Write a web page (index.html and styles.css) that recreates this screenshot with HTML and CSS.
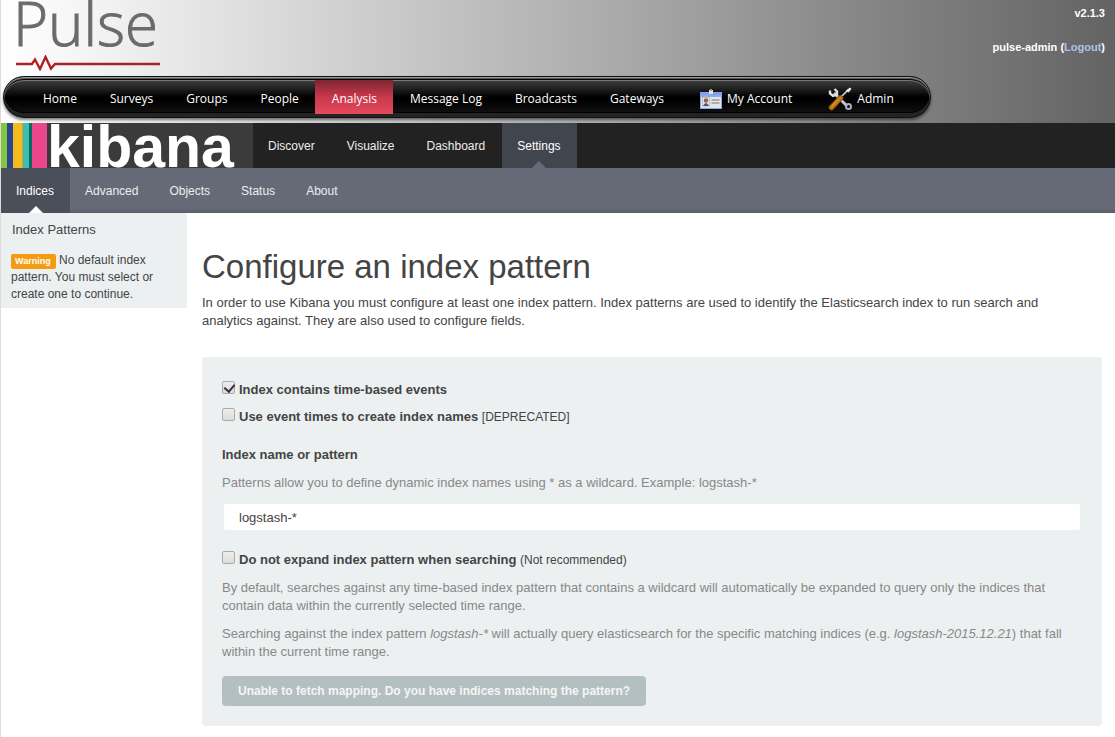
FILE: index.html
```html
<!DOCTYPE html>
<html lang="en">
<head>
<meta charset="utf-8">
<title>Pulse - Analysis</title>
<link rel="stylesheet" href="styles.css">
</head>
<body>
<header class="banner">
  <div class="banner-top">
    <div class="brand">
      <span class="brand-name">Pulse</span>
      <svg class="brand-line" width="147" height="16" viewBox="-3 0 147 16" aria-hidden="true"><path d="M0 9H16L19 4.500L24 14L29.500 2L35 13.500L39 9H144" fill="none" stroke="#b01f26" stroke-width="2.400"/></svg>
    </div>
    <div class="account">
      <span>v2.1.3</span>
      <span>pulse-admin (<a href="#logout">Logout</a>)</span>
    </div>
  </div>
  <nav class="menu" aria-label="Main">
    <a href="#home">Home</a>
    <a href="#surveys">Surveys</a>
    <a href="#groups">Groups</a>
    <a href="#people">People</a>
    <a class="current" href="#analysis">Analysis</a>
    <a href="#log">Message Log</a>
    <a href="#broadcasts">Broadcasts</a>
    <a href="#gateways">Gateways</a>
    <a class="with-icon" href="#account"><svg width="22" height="20" viewBox="0 0 22 20" aria-hidden="true"><rect x=".5" y="3.500" width="21" height="16" fill="#e3e4ea" stroke="#8aa6e6"/><path d="M1 4h20v4H1z" fill="#8cabf0"/><path d="M1 4h20v1.500H1z" fill="#7c9be6"/><path d="M9 1h4v4H9z" fill="#e1e1e1"/><path d="M10 0h2v2h-2z" fill="#999"/><path d="M2.500 8.500h7v8.500h-7z" fill="#eee8dc" stroke="#a9a9a9" stroke-width=".7"/><circle cx="6" cy="11.500" r="2.200" fill="#9a6138"/><path d="M3 17q3-6 6 0z" fill="#425a9a"/><path d="M11.500 11h8M11.500 14h8" stroke="#9b9b9b" stroke-width="1.300"/></svg>My Account</a>
    <a class="with-icon" href="#admin"><svg width="24" height="24" viewBox="0 0 24 24" aria-hidden="true"><path d="M6 6L19 19" stroke="#c3c5cd" stroke-width="3"/><path d="M2 3.500v3l3 2.500 4-1.500V4.500L6.500 2" fill="none" stroke="#dfe0e6" stroke-width="2.400"/><circle cx="20.500" cy="19.500" r="2.500" fill="none" stroke="#aeb0bd" stroke-width="2"/><path d="M11 12L20 3" stroke="#d7d8de" stroke-width="1.600"/><path d="M18 3.500L22 0.500L23.500 2L20.500 5.500z" fill="#eeeff3"/><path d="M3.500 20.500L12.500 11" stroke="#8a4b08" stroke-width="5.500" stroke-linecap="round"/><path d="M3.500 20.500L12.500 11" stroke="#c87a1a" stroke-width="3.800" stroke-linecap="round"/><path d="M4 18.500L11 11.500" stroke="#f2b550" stroke-width="1" stroke-dasharray="2 1"/></svg>Admin</a>
  </nav>
</header>

<div class="kibana-bar">
  <a class="kibana-logo" href="#kibana">
    <svg class="stripes" width="46" height="45" viewBox="0 0 46 45" aria-hidden="true"><path fill="#85c441" d="M0 0h6v45H0z"/><path fill="#2b4590" d="M6 0h6v45H6z"/><path fill="#f3bb1b" d="M12 0h10v45H12z"/><path fill="#c9a33a" d="M21 0h1v45h-1z"/><path fill="#3dbeb3" d="M22 0h6v45h-6z"/><path fill="#076b60" d="M28 0h3v45h-3z"/><path fill="#eb458c" d="M31 0h15v45H31z"/></svg>
    <span class="kibana-word">kibana</span>
  </a>
  <nav class="tabs" aria-label="Kibana">
    <a href="#discover">Discover</a>
    <a href="#visualize">Visualize</a>
    <a href="#dashboard">Dashboard</a>
    <a class="active" href="#settings">Settings</a>
  </nav>
</div>
<nav class="tabs subtabs" aria-label="Settings">
  <a class="active" href="#indices">Indices</a>
  <a href="#advanced">Advanced</a>
  <a href="#objects">Objects</a>
  <a href="#status">Status</a>
  <a href="#about">About</a>
</nav>

<div class="content">
  <aside class="sidebar">
    <h2>Index Patterns</h2>
    <p><span class="badge">Warning</span> No default index pattern. You must select or create one to continue.</p>
  </aside>
  <main>
    <h1>Configure an index pattern</h1>
    <p class="intro">In order to use Kibana you must configure at least one index pattern. Index patterns are used to identify the Elasticsearch index to run search and analytics against. They are also used to configure fields.</p>
    <form class="well">
      <label class="check"><input type="checkbox" checked><span><strong>Index contains time-based events</strong></span></label>
      <label class="check"><input type="checkbox"><span><strong>Use event times to create index names</strong> <small>[DEPRECATED]</small></span></label>
      <label class="field-label" for="pattern">Index name or pattern</label>
      <p class="help">Patterns allow you to define dynamic index names using * as a wildcard. Example: logstash-*</p>
      <input class="text" id="pattern" type="text" value="logstash-*">
      <label class="check"><input type="checkbox"><span><strong>Do not expand index pattern when searching</strong> <small>(Not recommended)</small></span></label>
      <div class="notes">
        <p class="help">By default, searches against any time-based index pattern that contains a wildcard will automatically be expanded to query only the indices that contain data within the currently selected time range.</p>
        <p class="help">Searching against the index pattern <em>logstash-*</em> will actually query elasticsearch for the specific matching indices (e.g. <em>logstash-2015.12.21</em>) that fall within the current time range.</p>
      </div>
      <button type="submit" disabled>Unable to fetch mapping. Do you have indices matching the pattern?</button>
    </form>
  </main>
</div>
</body>
</html>
```
FILE: styles.css
```css
* { box-sizing: border-box; }
body {
  margin: 0;
  min-height: 100vh;
  border-left: 1px solid #dcdcdc;
  background: #fff;
  color: #444;
  font: 13px/18px "Liberation Sans", Arial, sans-serif;
}
a { text-decoration: none; }
h1, h2, p { margin: 0; }

.banner {
  height: 123px;
  overflow: hidden;
  padding-left: 2px;
  background: linear-gradient(90deg, #fff 0%, #f4f4f4 8%, #dcdcdc 23%, #b4b4b4 49%, #8a8a8a 75%, #636363 100%);
}
.banner-top {
  display: flex;
  justify-content: space-between;
  height: 76px;
  padding: 0 10px;
}
.brand { display: flex; flex-direction: column; }
.brand-name {
  height: 55px;
  color: #6b6b6b;
  font: 300 60px/46px "Open Sans", sans-serif;
  -webkit-text-stroke: 1px #6b6b6b;
}
.brand-line { display: block; }
.account {
  display: flex;
  flex-direction: column;
  gap: 16px;
  padding-top: 4px;
  color: #fff;
  font-size: 11px;
  font-weight: bold;
  text-align: right;
}
.account a { color: #a9c4e6; }

.menu {
  display: flex;
  width: fit-content;
  height: 42px;
  padding: 3px 20px 3px 22px;
  border: 1px solid #111;
  border-radius: 21px;
  background: linear-gradient(#4a4a4a 0%, #222 28%, #000 50%, #000 58%, #161616 100%);
  box-shadow: inset 0 1px 0 #999, inset 0 2px 0 #555, inset 0 3px 0 #050505, inset 0 4px 0 #777, inset 0 -4px 0 #242424, inset 0 -5px 0 #000, 0 2px 3px rgba(0, 0, 0, .5);
}
.menu a {
  display: flex;
  align-items: center;
  gap: 5px;
  padding: 3px 16px 0 17px;
  color: #fff;
  font: 500 12px/16px "Open Sans", sans-serif;
  white-space: nowrap;
}
.menu .with-icon { padding-left: 20px; }
.menu .current {
  background: linear-gradient(#7e2531, #c8384b 50%, #e7495c);
}

.kibana-bar {
  display: flex;
  height: 45px;
  background: #222;
}
.kibana-logo {
  display: flex;
  width: 252px;
  overflow: hidden;
  background: #3b3b3b;
}
.kibana-word {
  height: 45px;
  color: #fff;
  font: bold 59px/48px "Liberation Sans", Arial, sans-serif;
}
.tabs { display: flex; gap: 1px; font-size: 12px; }
.tabs a {
  position: relative;
  padding: 2px 16px 0 15px;
  color: #eee;
  line-height: 43px;
}
.tabs .active { background: #41454d; color: #fff; }
.tabs .active::after {
  content: "";
  position: absolute;
  bottom: 0;
  left: 50%;
  margin-left: -7px;
  border: 7px solid transparent;
  border-top: 0;
  border-bottom-color: #656a76;
}
.subtabs {
  gap: 0;
  background: linear-gradient(#656a76 90%, #5a5e69);
}
.subtabs .active { background: #4b4f5a; }
.subtabs .active::after { border-bottom-color: #fff; }

.content { display: flex; align-items: flex-start; }
.sidebar {
  flex: 0 0 186px;
  padding: 8px 20px 5px 10px;
  background: #ecf0f1;
  font-size: 12px;
  line-height: 17px;
}
.sidebar h2 {
  margin-bottom: 14px;
  padding-left: 1px;
  font-size: 13px;
  font-weight: normal;
}
.badge {
  display: inline-block;
  padding: 0 5px 0 4px;
  border-radius: 2px;
  background: #f39c12;
  color: #fff;
  font-size: 9px;
  font-weight: bold;
  line-height: 15px;
}
main { flex: 1; min-width: 0; padding: 34px 13px 11px 15px; }
h1 { font-size: 33px; font-weight: normal; line-height: 40px; }
.intro { margin: 7px 0 27px; padding-right: 20px; }
.well {
  padding: 20px;
  border-radius: 4px;
  background: #ecf0f1;
}
.check {
  display: flex;
  align-items: flex-start;
  gap: 4px;
  padding: 4px 0 5px;
}
.check input {
  flex: none;
  width: 13px;
  height: 13px;
  margin: 0;
  appearance: none;
  border: 1px solid #aaa;
  border-radius: 2px;
  background: linear-gradient(#eee, #dcdcdc);
}
.check input:checked::after {
  content: "";
  display: block;
  width: 5px;
  height: 8px;
  margin: 0 0 0 3px;
  border: solid #333;
  border-width: 0 2px 2px 0;
  transform: rotate(40deg);
}
.check small { font-size: 12px; }
.field-label { display: block; margin: 15px 0 10px; font-weight: bold; }
.help { margin-bottom: 10px; color: #888; }
.notes { padding-top: 5px; }
.text {
  display: block;
  width: calc(100% - 4px);
  height: 26px;
  margin: 12px 2px 17px;
  padding: 0 15px;
  border: 0;
  border-radius: 2px;
  background: #fff;
  color: #444;
  font: inherit;
}
button {
  display: block;
  height: 30px;
  margin-top: 15px;
  padding: 0 16px;
  border: 0;
  border-radius: 4px;
  background: #b3bfc0;
  color: #f4f6f6;
  font: bold 12px/18px "Liberation Sans", Arial, sans-serif;
}
```
